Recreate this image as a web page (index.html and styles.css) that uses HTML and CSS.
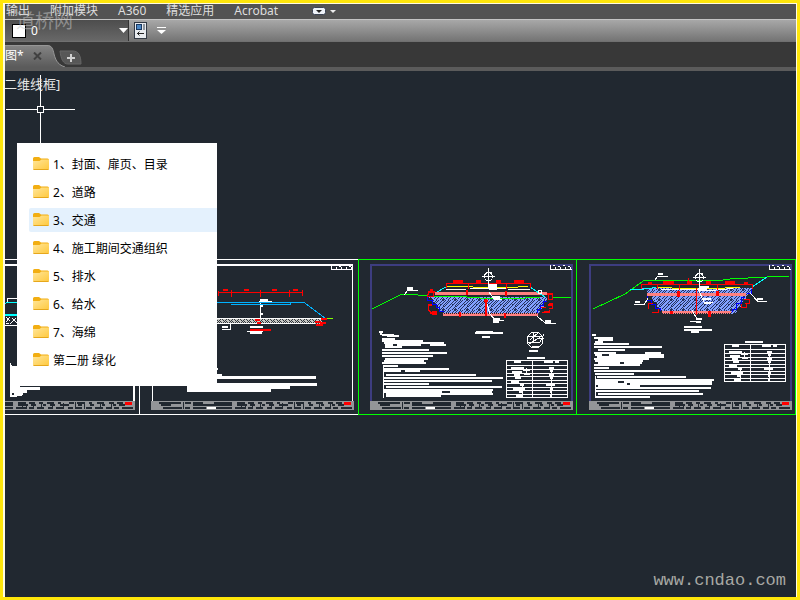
FILE: index.html
```html
<!DOCTYPE html>
<html lang="zh-CN">
<head>
<meta charset="utf-8">
<title>道路图纸</title>
<link rel="stylesheet" href="styles.css">
</head>
<body>
<div class="frame">
  <nav class="menubar">
    <a href="#">输出</a>
    <a href="#">附加模块</a>
    <a href="#">A360</a>
    <a href="#">精选应用</a>
    <a href="#">Acrobat</a>
    <button class="ribbon-toggle" aria-label="功能区">
      <svg width="24" height="9" viewBox="0 0 24 9"><rect x=".5" y=".5" width="13" height="7" rx="2" fill="#eef2f8" stroke="#3c4454"/><path d="M4 3h6l-3 3z" fill="#222"/><path d="M18 3h6l-3 3z" fill="#eee"/></svg>
    </button>
  </nav>
  <div class="toolbar">
    <div class="layer">
      <span class="swatch"></span>
      <select class="layer-select" aria-label="图层"><option>0</option></select>
      <svg class="layer-arrow" width="9" height="5" viewBox="0 0 9 5"><path d="M0 0h9L4.500 5z" fill="#fff"/></svg>
    </div>
    <button class="tool" aria-label="图层特性">
      <svg width="14" height="18" viewBox="0 0 14 18"><rect x=".5" y=".5" width="12" height="16" fill="#e8ebef" stroke="#333a45"/><rect x="2.500" y="2.500" width="5" height="5" fill="#4b87c5" stroke="#19375f"/><path d="M9 2h2v6H9z" fill="#8e949c"/><path d="M3 11.500h7M5.500 9.500L3.500 11.500l2 2" fill="none" stroke="#222"/></svg>
    </button>
    <button class="tool" aria-label="更多">
      <svg width="9" height="9" viewBox="0 0 9 9"><path d="M0 1h9v1H0zM0 4h9L4.500 8z" fill="#fff"/></svg>
    </button>
  </div>
  <div class="tabs">
    <button class="tab">
      <svg class="tab-shape" width="60" height="22" viewBox="0 0 60 22"><defs><linearGradient id="tg" x2="0" y2="1"><stop stop-color="#858585"/><stop offset="1" stop-color="#5b5b5b"/></linearGradient></defs><path d="M0 0H42C47 0 48 4 49 9C51 17 54 20 60 22H0z" fill="url(#tg)"/><path d="M0 .5H42C47 .5 48 4 49 9C51 17 54 20 60 22" fill="none" stroke="#969696"/></svg>
      <span class="tab-name">图*</span>
      <svg class="tab-close" width="9" height="8" viewBox="0 0 9 8"><path d="M1 .5l7 7M8 .5l-7 7" stroke="#404040" stroke-width="2"/></svg>
    </button>
    <button class="new-tab" aria-label="新图形">
      <svg width="24" height="16" viewBox="0 0 24 16"><path d="M1 1H14C19 1 22 5 22 14H9C4 14 2 9 1 1z" fill="#575757" stroke="#666"/><path d="M8 8h8M12 4v8" stroke="#d0d0d0" stroke-width="2"/></svg>
    </button>
  </div>
  <main class="canvas">
    <svg class="drawing" viewBox="5 71 791 526" preserveAspectRatio="xMinYMin slice">
      <defs>
        <pattern id="soil" width="12" height="10" patternUnits="userSpaceOnUse"><rect width="12" height="10" fill="#25325e"/><path d="M0 0h1v1h-1zM2 0h2v1h-2zM5 0h1v1h-1zM7 0h3v1h-3zM1 1h2v1h-2zM4 1h1v1h-1zM6 1h3v1h-3zM10 1h2v1h-2zM0 2h2v1h-2zM3 2h1v1h-1zM5 2h3v1h-3zM9 2h2v1h-2zM0 3h1v1h-1zM2 3h1v1h-1zM4 3h3v1h-3zM8 3h2v1h-2zM11 3h1v1h-1zM1 4h1v1h-1zM3 4h3v1h-3zM7 4h1v1h-1zM10 4h2v1h-2zM0 5h1v1h-1zM2 5h3v1h-3zM6 5h2v1h-2zM9 5h2v1h-2zM1 6h3v1h-3zM5 6h2v1h-2zM8 6h3v1h-3zM0 7h3v1h-3zM4 7h2v1h-2zM7 7h3v1h-3zM11 7h1v1h-1zM0 8h2v1h-2zM3 8h2v1h-2zM6 8h3v1h-3zM10 8h1v1h-1zM1 9h3v1h-3zM5 9h3v1h-3zM9 9h1v1h-1z" fill="#82a0ff"/></pattern>
        <pattern id="gravel" width="6" height="4" patternUnits="userSpaceOnUse"><rect width="6" height="4" fill="#c8c8c4"/><path d="M1 0h1v1h-1zM3 0h1v1h-1zM2 1h1v1h-1zM4 1h1v1h-1zM1 2h1v1h-1zM3 2h1v1h-1zM5 2h1v1h-1zM0 3h1v1h-1zM4 3h1v1h-1z" fill="#30363c"/></pattern>
        <pattern id="curb" width="2" height="3" patternUnits="userSpaceOnUse"><rect width="2" height="3" fill="#ff8080"/><rect y="1" width="1" height="1" fill="#212830"/></pattern>
        <g id="strip">
          <rect width="203" height="9" fill="#939598"/>
          <path d="M8 2h22M34 2h6M42 2h10M63 2h18M86 2h8M97 2h6M107 2h4M115 2h7M126 2h3M137 2h5M145 2h8M157 2h3M165 2h7M177 2h5M185 2h6M10 4h10M42 4h39M86 4h10M99 4h5M111 4h3M118 4h5M128 4h9M146 4h4M158 4h4M170 4h3M181 4h3M187 4h6M12 7h19M34 7h5M42 7h13M64 7h17M84 7h11M97 7h5M105 7h7M116 7h4M124 7h8M136 7h5M144 7h6M154 7h6M163 7h8M174 7h5M182 7h5M190 7h11" stroke="#212830" stroke-width="1.500"/>
          <path d="M90 1v7M101 2v6M109 1v6M120 1v7M131 2v5M143 1v7M152 1v7M168 2v6M179 1v7M32 1v7M94 3v4" stroke="#212830"/>
          <path d="M56 6.500h9" stroke="#fff" stroke-width="2"/><path d="M193 2.500h7" stroke="#f00" stroke-width="3"/>
        </g>
        <g id="tag" fill="none" stroke="#fff"><path d="M.5 0V4.500H21.500M3 .5h2M5.500 2v2M8 1.500h2M10.500 2v2M13 .5h2M15.500 2v2M18 1.500h2M20.500 2v2"/></g>
        <g id="table" fill="none" stroke="#fff">
          <path d="M.5 .5h61v37H.5zM26.500 0v38M0 5.500h62M0 9.500h62M0 13.500h62M0 16.500h62M0 20.500h62M0 23.500h62M0 27.500h62M0 30.500h62M0 34.500h62"/>
          <path d="M8 2h7M38 2h9M49 2h4M5 8h13M17 10h7M6 12h10M8 15h6M18 14h6M9 18h6M5 22h8M14 25h4M7 29h12M13 32h4M10 36h7M43 8h5M44 11h3M43 15h5M44 18h3M40 25h9M44 29h3M44 32h2M44 36h2" stroke-width="2"/>
          <path d="M45.500 7v30M16.500 24v12M20.500 8v7"/>
        </g>
        <g id="north" fill="none" stroke="#fff"><circle r="4" cx=".5" cy=".5"/><path d="M-6 .5H7M.5-8V13M-2-3.500H4M-2 4.500h5"/></g>
      </defs>

      <!-- crosshair cursor -->
      <g class="crisp" fill="none" stroke="#fff"><path d="M6 109.500h31M44 109.500h31M40.500 75v31M40.500 113v31M37.500 106.500h6v6h-6z"/></g>

      <!-- sheet borders -->
      <g class="crisp" fill="none" stroke="#fff">
        <path d="M5 259.500h353M5 414.500h353M139.500 259v155M152.500 266v135M352.500 265v136"/>
        <path d="M5 265h130M152 265h201M134 265v136" stroke-width="2"/>
        <path d="M358.500 259.500h437v155h-437zM576.500 259v155" stroke="#0f0"/>
        <path d="M371 401V265h200.500v136M590 401V265h200.500v136" stroke="#3d3d80" stroke-width="2"/>
      </g>
      <g class="crisp">
        <svg x="5" y="401" width="130" height="9" viewBox="73 0 130 9"><use href="#strip"/></svg>
        <use href="#strip" x="151" y="401"/><use href="#strip" x="370" y="401"/><use href="#strip" x="589" y="401"/>
        <use href="#tag" x="331" y="265"/><use href="#tag" x="550" y="265"/><use href="#tag" x="769" y="265"/>
      </g>

      <!-- sheet 1 -->
      <g class="crisp" fill="none" stroke="#fff">
        <path d="M5 325.500h12M17 298.500H7.500v4M10.500 363v34M11.500 365v32"/>
        <path d="M5 304l2-1.500h10" stroke="#0ff"/><path d="M5 315h12" stroke="#0ff" stroke-width="2"/>
        <path d="M6 317l4 4M10 317l-4 5M12 318l5 5M16 318l-6 6M6 323h3" />
        <path d="M12 367.500h5M12 370.500h5M11 373.500h6M11 376.500h6M12 379.500h5M12 382.500h5M11 385.500h9M11 388.500h29M12 391.500h15" stroke-width="3"/>
        <path d="M14 394h9M11 396h6M17 395h5" stroke-width="2"/>
      </g>

      <!-- sheet 2 -->
      <g class="crisp" fill="none" stroke="#fff">
        <rect x="217" y="319" width="105" height="5" fill="url(#gravel)" stroke="none"/>
        <path d="M217 318.500h109M217 323.500h98M260.500 299v19M259 301.500h13M230.500 324v5h-9M247 331.500h16"/>
        <path d="M260 300h8M261 306h2M261 314h2M222 326.500h6M250 327h13M250 333h12" stroke-width="2"/>
        <path d="M218 292.500h85M218.500 291v5M231.500 290v7M260.500 290v7M289.500 290v7M302.500 290v6" stroke="#f00"/>
        <path d="M223 290h5M244 290h5M272 290h5M293 290h5M250 330h21M255 320h5M257 323h4M315 322h6M316 325h7M321 319h6M320 323h6" stroke="#f00" stroke-width="2"/>
        <path d="M217 302.500h87L325 318M231 304.500h59v-2" stroke="#00b2ff"/><path d="M327 318.500h6" stroke="#80ff00"/>
        <path d="M217 375h5M217 369h1" stroke-width="2"/><path d="M217 377.500h99M217 384.500h100M187 387.500h103M187 390.500h84" stroke-width="3"/>
      </g>

      <!-- sheet 3 -->
      <g class="crisp" fill="none">
        <path d="M427 297h120v3l-3 3v4l-4 3v3l-3 2h-94v-3l-5-3v-4l-5-3v-3l-6-2z" fill="url(#soil)"/>
        <path d="M427.500 297v3h5v4h4v3h3v4h4M546.500 301h-3v4h-3v4h-3v5" stroke="#00f"/>
        <rect x="443" y="313" width="95" height="3" fill="url(#curb)"/><rect x="435" y="292" width="112" height="3" fill="#ff8080"/>
        <path d="M372 309l30-15 11 .5 14 1.500M432 296.500h28l20 1.500h45l15-1M552 297.500h19" stroke="#0f0"/>
        <path d="M437 292l9-5M530 287l15 10" stroke="#0ff"/>
        <path d="M447 286.500h20l12 1h30l19-1" stroke="#ff0"/><path d="M446 289.500h20M470 288.500h36M508 289.500h22" stroke="#fff"/>
        <g stroke="#f00"><path d="M446.500 288v-4.500h84v4M468.500 283v6M506.500 283v6M428.500 292.500h5v4h-6z"/>
          <path d="M453 281.500h10M476 281.500h5M496 281.500h5M514 281.500h10" stroke-width="3"/>
          <path d="M428 292h7M430 290h3M485.500 299v17M484 301h4M467 290v5M506 291v5M504.500 313v5M460 312v5M547 294h6M430 312.500h7M548 305h4M428 305h4M544 312h5" stroke-width="2"/>
          <path d="M548.500 294v5h4v-6M549 303.500h3v5h-3M541 307.500h5M542 312.500h7v-3M432 304.500h-4v5l3 3M432 311.500h4v3h-4z"/></g>
        <g stroke="#fff"><path d="M404 295l4-5h10M489 292l5 7h8M487 304l3 10 5 6h9M537 316l8 7h11"/><circle cx="540" cy="292" r="2"/>
          <path d="M407 288.500h6M489 285.500h8M489 288.500h8M493 297h7M493 319h7M493 321h6M545 321h6" stroke-width="3"/></g>
        <use href="#north" x="488" y="276"/>
        <g stroke="#fff" stroke-width="2">
          <path d="M475 333h28M476 331.500h17M482 337h8M379 332h4M380 334h2M382 335h12M387 336h12M382 338.500h13M382 341h41M384 343h60M385 344.500h8M397 344.500h24M430 344.500h16M385 347h17M382 350h47M382 353h65M382 356h51M385 359h43M384 361h40M382 363h44M383 366h15M383 369h66M383 371h18M405 371h15M386 375h90M383 378h120M383 381h109M383 384h46M386 387h116M383 390h110M383 392h59M450 392h42M386 394h107M386 396h55"/>
          <path d="M383.500 367v31" stroke-width="1"/><path d="M529 351h9M527 358h18"/>
        </g>
        <g stroke="#fff"><circle cx="535" cy="340" r="8"/><path d="M528 336h13M530 340l9-8M528 342h12l4-8M533 333v9M529 344l13-8M537 338h7M532 346h7"/></g>
        <use href="#table" x="506" y="360"/>
      </g>

      <!-- sheet 4 -->
      <g class="crisp" fill="none">
        <path d="M641 288h111v4l-6 4v3l-4 3v4l-5 3v3l-6 2h-69v-4l-5-3v-4l-5-3v-4l-5-3-1-4h-5z" fill="url(#soil)"/>
        <path d="M647.500 296v4h4v4h4v4h5v3M751.500 289v4h-5M744.500 297h-3v6h-5v6h-4v3" stroke="#00f"/>
        <rect x="647" y="293" width="99" height="3" fill="#ff8080"/><rect x="662" y="311" width="69" height="3" fill="url(#curb)"/>
        <path d="M593 309l32-15 19-13.500h76l10-1.500 37-2 22-.5" stroke="#0f0"/>
        <path d="M630 289.500h10l16-2M752 287l15-10" stroke="#0ff"/>
        <path d="M658 287.500l28 1h25l29-1" stroke="#ff0"/><path d="M661 289.500h25l24 1 23-2" stroke="#fff"/>
        <g stroke="#f00"><path d="M641.500 289v-4.500h111v4M657.500 284v5M679.500 284v6M717.500 284v6M688.500 278v6M696.500 288v27M653 303.500h-5v5M652 312.500h6v-4M741 304v3h5v-4M744 299.500h5v4h-4"/>
          <path d="M648 283h4M663 282h11M687 282.500h5M706 282.500h5M725 282h10M744 283h4M678 291v6M717 291v5M709.500 311v6M671.500 311v3" stroke-width="3"/></g>
        <g stroke="#fff"><path d="M655 280l3-4h10M634 304.500h10l4-6M699 291l5 11h9M692 310l5 9M690 321h10M750 293l8 8.500h9"/>
          <path d="M658 274h5M635 302h5M699 286.500h10M698 289h9M703 299h8M704 303h7M696 318.500h6M696 321.500h5M757 299h6" stroke-width="2"/></g>
        <use href="#north" x="699" y="277"/>
        <g stroke="#fff" stroke-width="2">
          <path d="M684 327h18M684 330h28M691 332h8M592 335h4M594 338h19M598 340h15M595 342h8M594 344h35M594 347h68M598 350h27M594 353h22M645 353h16M595 355h7M609 355h55M597 357h67M594 359h55M595 361h48M598 363h22M624 363h18M594 365h46M594 368h15M594 371h66M595 374h39M597 377h89M595 380h119M595 382h23M624 382h88M595 384h32M630 384h82M598 386h42M595 388h116M595 391h104M598 394h105M595 397h55"/>
          <path d="M595.500 376v22" stroke-width="1"/><path d="M745 342h18"/>
        </g>
        <use href="#table" x="724" y="344"/>
      </g>
    </svg>
    <span class="view-label">二维线框]</span>
    <ul class="folders">
      <li><a href="#"><svg class="folder"><use href="#folder"/></svg>1、封面、扉页、目录</a></li>
      <li><a href="#"><svg class="folder"><use href="#folder"/></svg>2、道路</a></li>
      <li><a href="#" class="current"><svg class="folder"><use href="#folder"/></svg>3、交通</a></li>
      <li><a href="#"><svg class="folder"><use href="#folder"/></svg>4、施工期间交通组织</a></li>
      <li><a href="#"><svg class="folder"><use href="#folder"/></svg>5、排水</a></li>
      <li><a href="#"><svg class="folder"><use href="#folder"/></svg>6、给水</a></li>
      <li><a href="#"><svg class="folder"><use href="#folder"/></svg>7、海绵</a></li>
      <li><a href="#"><svg class="folder"><use href="#folder"/></svg>第二册 绿化</a></li>
    </ul>
    <span class="site">www.cndao.com</span>
  </main>
  <span class="brand">道桥网</span>
</div>
<svg class="symbols" aria-hidden="true">
  <defs><linearGradient id="fg" x2="1" y2="1"><stop stop-color="#ffe69a"/><stop offset="1" stop-color="#ffc83c"/></linearGradient></defs>
  <symbol id="folder" viewBox="0 0 16 13"><path d="M0 1.500Q0 0 1.500 0H6l2 1.500h6.500Q16 1.500 16 3v8H0z" fill="#f2ae12"/><path d="M0 4h6.500l2-1.500H16v9q0 1.500-1.500 1.500h-13Q0 13 0 11.500z" fill="url(#fg)"/><path d="M.5 12.500h15" stroke="#e6a71c"/></symbol>
</svg>
</body>
</html>
```
FILE: styles.css
```css
* { box-sizing: border-box; }
body {
  margin: 0;
  font: 12px/16px "Noto Sans", "Noto Sans CJK SC", sans-serif;
}
a { color: inherit; text-decoration: none; }
button { border: 0; padding: 0; background: none; font: inherit; color: inherit; }
svg { display: block; }

.frame {
  position: relative;
  display: flex;
  flex-direction: column;
  height: 100vh;
  border: 3px solid #ffe60a;
  overflow: hidden;
}
.frame::after {
  content: "";
  position: absolute;
  inset: 0;
  border: solid #fffbe0;
  border-width: 1px 1px 0 2px;
  pointer-events: none;
}

.menubar {
  display: flex;
  align-items: center;
  gap: 20px;
  height: 16px;
  padding-left: 3px;
  background: #535353;
  color: #dedede;
  white-space: nowrap;
  line-height: 16px;
}
.ribbon-toggle { margin: 0 0 0 14px; }

.toolbar {
  display: flex;
  align-items: center;
  height: 23px;
  padding-left: 2px;
  background: linear-gradient(#a8a8a8, #747474);
  border-top: 1px solid #c4c4c4;
  border-bottom: 1px solid #707070;
}
.layer {
  position: relative;
  width: 124px;
  height: 21px;
  margin-right: 5px;
}
.layer-select {
  appearance: none;
  width: 100%;
  height: 100%;
  padding: 0 0 0 26px;
  border: 0;
  border-right: 1px solid #333;
  border-radius: 0;
  background: linear-gradient(#4d4d4d, #686868);
  color: #fff;
  font: inherit;
}
.swatch {
  position: absolute;
  left: 7px;
  top: 4px;
  width: 14px;
  height: 14px;
  border: 1px solid #000;
  background: #fff;
}
.layer-arrow { position: absolute; right: 1px; top: 8px; }
.tool { margin-right: 9px; }

.tabs {
  display: flex;
  align-items: flex-end;
  height: 29px;
  padding-left: 2px;
  background: #383838;
  border-bottom: 4px solid #5b5b5b;
}
.tab {
  position: relative;
  display: flex;
  align-items: center;
  gap: 9px;
  width: 54px;
  height: 22px;
  color: #fff;
}
.tab-shape { position: absolute; left: 0; top: 0; }
.tab-name, .tab-close { position: relative; }
.new-tab { margin-bottom: 1px; }

.canvas {
  position: relative;
  flex: 1;
  min-height: 0;
  margin: 0 1px 0 2px;
  background: #212830;
}
.drawing { width: 100%; height: 100%; }
.crisp { shape-rendering: crispEdges; }
.view-label {
  position: absolute;
  left: -1px;
  top: 5px;
  color: #e8e8e8;
  font-size: 13px;
}

.folders {
  position: absolute;
  left: 12px;
  top: 72px;
  display: flex;
  flex-direction: column;
  gap: 4px;
  width: 200px;
  margin: 0;
  padding: 9px 0 14px 12px;
  background: #fff;
  list-style: none;
  color: #000;
}
.folders a {
  display: flex;
  align-items: center;
  gap: 4px;
  height: 24px;
  padding: 1px 0 0 4px;
  line-height: 18px;
}
.folders .current { background: #e4f1fd; border-radius: 2px 0 0 2px; }
.folder { width: 16px; height: 13px; margin-bottom: 2px; }

.site {
  position: absolute;
  right: 10px;
  bottom: 4px;
  color: #a8a8a4;
  font: 17px/24px "Liberation Mono", monospace;
}
.brand {
  position: absolute;
  left: 13px;
  top: 5px;
  color: rgba(200, 200, 200, .5);
  font: 19px/24px "Noto Sans CJK SC", sans-serif;
}
.symbols { position: absolute; width: 0; height: 0; }
```
